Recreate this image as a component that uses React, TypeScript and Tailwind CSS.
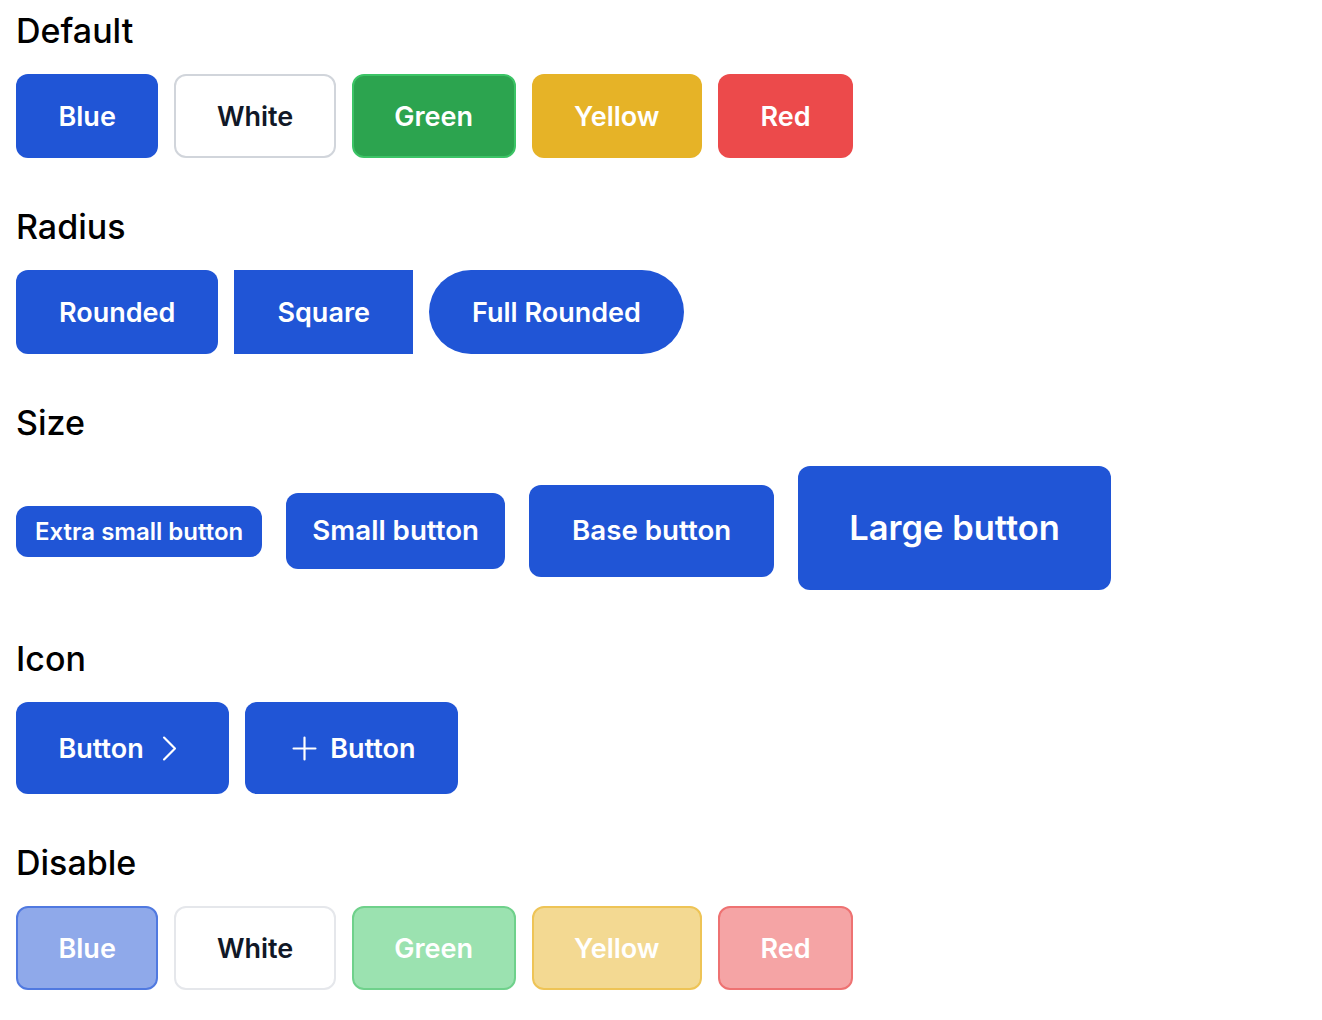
import type { ReactNode } from 'react'

const base =
  'inline-flex items-center justify-center border-2 font-semibold text-[27px] leading-none whitespace-nowrap'

function Section({ title, children, className = '' }: { title: string; children: ReactNode; className?: string }) {
  return (
    <section className={className}>
      <h2 className="text-[34px] font-medium leading-[44px] text-black">{title}</h2>
      {children}
    </section>
  )
}

function ChevronRight() {
  return (
    <svg viewBox="0 0 24 24" fill="none" stroke="currentColor" strokeWidth={1.5} className="h-[35px] w-[35px]">
      <path strokeLinecap="round" strokeLinejoin="round" d="m8.25 4.5 7.5 7.5-7.5 7.5" />
    </svg>
  )
}

function Plus() {
  return (
    <svg viewBox="0 0 24 24" fill="none" stroke="currentColor" strokeWidth={1.5} className="h-[35px] w-[35px]">
      <path strokeLinecap="round" strokeLinejoin="round" d="M12 4.5v15m7.5-7.5h-15" />
    </svg>
  )
}

const blue = 'border-transparent bg-[#2055d6] text-white'

const colors = [
  { label: 'Blue', cls: blue },
  { label: 'White', cls: 'border-[#d1d5db] bg-white text-[#111827]' },
  { label: 'Green', cls: 'border-[#3cc466] bg-[#2ca44f] text-white' },
  { label: 'Yellow', cls: 'border-transparent bg-[#e6b327] text-white' },
  { label: 'Red', cls: 'border-transparent bg-[#ec4a4b] text-white' },
]

const disabled = [
  { label: 'Blue', cls: 'border-[#5079e0] bg-[#8fa9ea] text-white' },
  { label: 'White', cls: 'border-[#e5e7eb] bg-white text-[#111827]' },
  { label: 'Green', cls: 'border-[#6fd18b] bg-[#9be2b0] text-white' },
  { label: 'Yellow', cls: 'border-[#eec456] bg-[#f3d992] text-white' },
  { label: 'Red', cls: 'border-[#ee7272] bg-[#f5a4a5] text-white' },
]

export default function App() {
  return (
    <div className="min-h-screen bg-white px-4 pt-[9px] font-['Inter',sans-serif] antialiased">
      <Section title="Default">
        <div className="mt-[21px] flex gap-4">
          {colors.map((c) => (
            <button key={c.label} type="button" className={`${base} h-[84px] rounded-xl px-[40.5px] ${c.cls}`}>
              {c.label}
            </button>
          ))}
        </div>
      </Section>

      <Section title="Radius" className="mt-[47px]">
        <div className="mt-[21px] flex gap-4">
          <button type="button" className={`${base} h-[84px] rounded-xl px-[41px] ${blue}`}>
            Rounded
          </button>
          <button type="button" className={`${base} h-[84px] px-[41px] ${blue}`}>
            Square
          </button>
          <button type="button" className={`${base} h-[84px] rounded-full px-[41px] ${blue}`}>
            Full Rounded
          </button>
        </div>
      </Section>

      <Section title="Size" className="mt-[47px]">
        <div className="mt-[21px] flex items-baseline gap-6">
          <button type="button" className={`${base} h-[51px] rounded-xl px-[17px] !text-[24px] ${blue}`}>
            Extra small button
          </button>
          <button type="button" className={`${base} h-[76px] rounded-xl px-[24px] !text-[27.7px] ${blue}`}>
            Small button
          </button>
          <button type="button" className={`${base} h-[92px] rounded-xl px-[41px] !text-[27.7px] ${blue}`}>
            Base button
          </button>
          <button type="button" className={`${base} h-[124px] rounded-xl px-[49px] !text-[34.5px] ${blue}`}>
            Large button
          </button>
        </div>
      </Section>

      <Section title="Icon" className="mt-[47px]">
        <div className="mt-[21px] flex gap-4">
          <button type="button" className={`${base} h-[92px] gap-2 rounded-xl px-[40.5px] ${blue}`}>
            Button
            <ChevronRight />
          </button>
          <button type="button" className={`${base} h-[92px] gap-2 rounded-xl px-[40px] ${blue}`}>
            <Plus />
            Button
          </button>
        </div>
      </Section>

      <Section title="Disable" className="mt-[47px]">
        <div className="mt-[21px] flex gap-4">
          {disabled.map((c) => (
            <button
              key={c.label}
              type="button"
              disabled
              className={`${base} h-[84px] cursor-not-allowed rounded-xl px-[40.5px] ${c.cls}`}
            >
              {c.label}
            </button>
          ))}
        </div>
      </Section>
    </div>
  )
}
